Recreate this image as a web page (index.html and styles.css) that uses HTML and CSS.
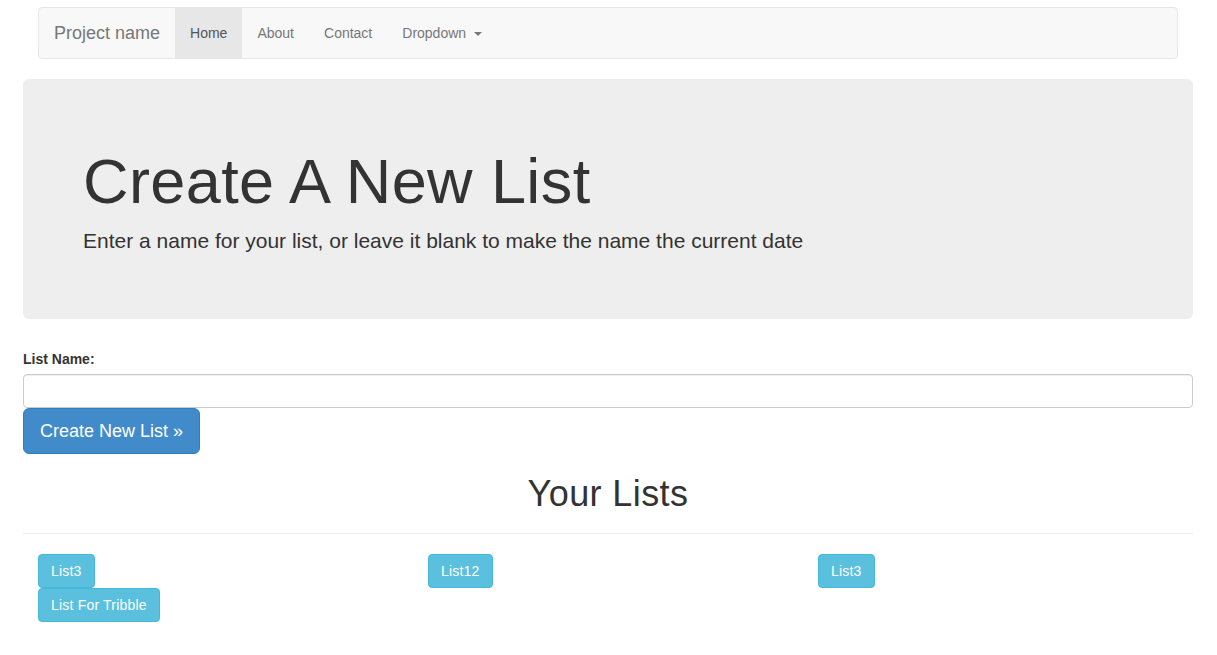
FILE: index.html
```html
<!DOCTYPE html>
<html lang="en">
<head>
<meta charset="utf-8">
<title>Create A New List</title>
<link rel="stylesheet" href="styles.css">
</head>
<body>
<div class="page">
  <nav class="navbar">
    <a class="brand" href="#">Project name</a>
    <ul class="nav">
      <li class="active"><a href="#">Home</a></li>
      <li><a href="#">About</a></li>
      <li><a href="#">Contact</a></li>
      <li><a href="#">Dropdown <span class="caret"></span></a></li>
    </ul>
  </nav>

  <div class="jumbotron">
    <h1>Create A New List</h1>
    <p>Enter a name for your list, or leave it blank to make the name the current date</p>
  </div>

  <form class="new-list">
    <label class="label" for="listName">List Name:</label>
    <input class="input" id="listName" type="text">
    <button class="btn btn-primary btn-lg" type="button">Create New List &raquo;</button>
  </form>

  <div class="page-header">
    <h1>Your Lists</h1>
  </div>

  <div class="row">
    <div class="col">
      <a class="btn btn-info" href="#">List3</a>
      <a class="btn btn-info" href="#">List For Tribble</a>
    </div>
    <div class="col">
      <a class="btn btn-info" href="#">List12</a>
    </div>
    <div class="col">
      <a class="btn btn-info" href="#">List3</a>
    </div>
  </div>
</div>
</body>
</html>
```

FILE: styles.css
```css
* { box-sizing: border-box; }
html, body { margin: 0; padding: 0; background: #fff; }
body {
  padding-right: 1px;
  font-family: "Liberation Sans", Arial, Helvetica, sans-serif;
  font-size: 14px;
  line-height: 1.428571;
  color: #333;
}
a { text-decoration: none; }

.page {
  width: 1170px;
  margin: 0 auto;
}

/* navbar */
.navbar {
  display: flex;
  align-items: stretch;
  margin: 7px 15px 20px;
  min-height: 52px;
  background: #f8f8f8;
  border: 1px solid #e7e7e7;
  border-radius: 4px;
}
.brand {
  display: block;
  padding: 15px;
  height: 50px;
  font-size: 18px;
  line-height: 20px;
  color: #777;
}
.nav {
  display: flex;
  list-style: none;
  margin: 0;
  padding: 0;
}
.nav a {
  display: block;
  padding: 15px;
  line-height: 20px;
  color: #777;
  height: 50px;
}
.nav .active a {
  background: #e7e7e7;
  color: #555;
}
.caret {
  display: inline-block;
  width: 0;
  height: 0;
  margin-left: 4px;
  vertical-align: middle;
  border-top: 4px solid #777;
  border-left: 4px solid transparent;
  border-right: 4px solid transparent;
}

/* jumbotron */
.jumbotron {
  background: #eee;
  border-radius: 6px;
  padding: 48px 60px;
  margin-bottom: 30px;
}
.jumbotron h1 {
  font-size: 63px;
  font-weight: 500;
  line-height: 1.1;
  letter-spacing: 0.4px;
  margin: 20px 0 10px;
  color: #333;
}
.jumbotron p {
  font-size: 21px;
  font-weight: 200;
  line-height: 1.428571;
  margin: 0 0 15px;
}

/* form */
.new-list {
  display: flex;
  flex-direction: column;
  align-items: flex-start;
}
.label {
  display: inline-block;
  font-weight: bold;
  margin-bottom: 5px;
  line-height: 20px;
}
.input {
  display: block;
  width: 100%;
  height: 34px;
  padding: 6px 12px;
  font-family: inherit;
  font-size: 14px;
  color: #555;
  background: #fff;
  border: 1px solid #ccc;
  border-radius: 4px;
  box-shadow: inset 0 1px 1px rgba(0,0,0,.075);
  margin: 0;
}

.btn {
  display: inline-block;
  font-family: inherit;
  font-size: 14px;
  line-height: 20px;
  padding: 6px 12px;
  border: 1px solid transparent;
  border-radius: 4px;
  color: #fff;
  text-align: center;
  white-space: nowrap;
  cursor: pointer;
}
.btn-lg {
  font-size: 18px;
  line-height: 24px;
  padding: 10px 16px;
  border-radius: 6px;
}
.btn-primary {
  background: #428bca;
  border-color: #357ebd;
}
.btn-info {
  background: #5bc0de;
  border-color: #46b8da;
  letter-spacing: 0.2px;
}

/* header */
.page-header {
  margin: 20px 0 20px;
  padding-bottom: 9px;
  border-bottom: 1px solid #eee;
}
.page-header h1 {
  margin: 0 0 10px;
  font-size: 36px;
  font-weight: 500;
  line-height: 1.1;
  letter-spacing: 0.4px;
  text-align: center;
}

/* lists */
.row {
  display: grid;
  grid-template-columns: repeat(3, 1fr);
}
.col {
  padding: 0 15px;
  display: flex;
  flex-direction: column;
  align-items: flex-start;
}
```
